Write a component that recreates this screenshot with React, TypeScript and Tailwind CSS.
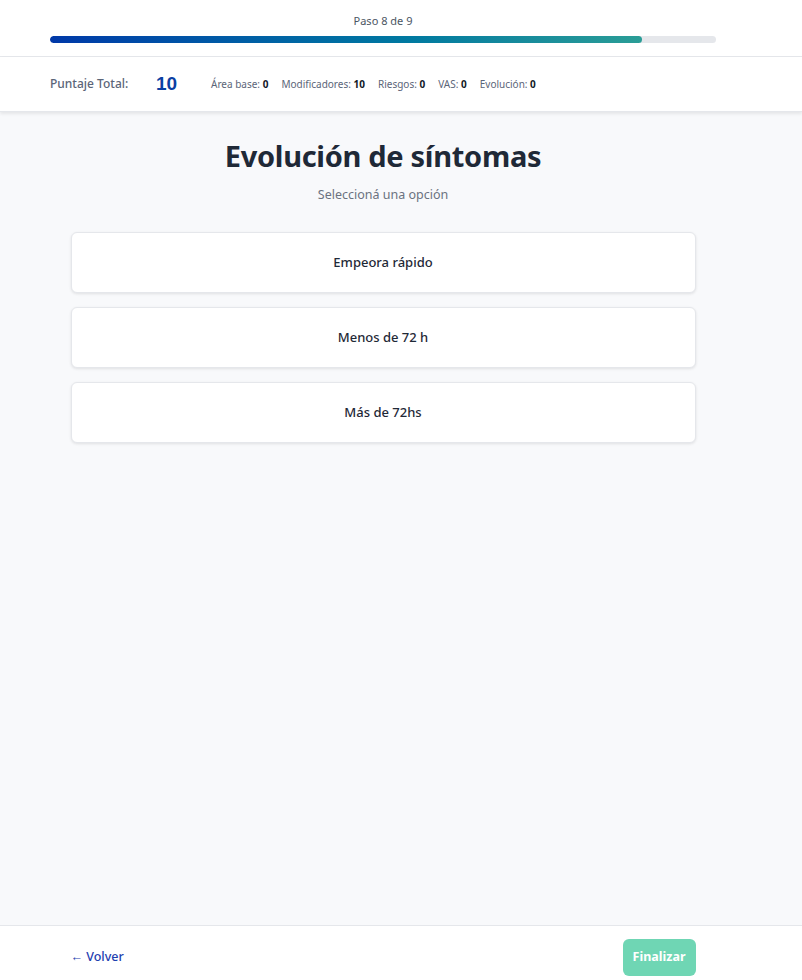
import React from "react";

const options = ["Empeora rápido", "Menos de 72 h", "Más de 72hs"];

const stats: [string, string][] = [
  ["Área base:", "0"],
  ["Modificadores:", "10"],
  ["Riesgos:", "0"],
  ["VAS:", "0"],
  ["Evolución:", "0"],
];

export default function App() {
  return (
    <div
      className="min-h-[980px] h-[980px] flex flex-col bg-[#f8f9fb] text-[#1f2937]"
      style={{ fontFamily: '"Noto Sans", "Open Sans", sans-serif' }}
    >
      {/* Progress header */}
      <div className="bg-white border-b border-[#e5e7eb]">
        <div className="w-[766px] px-[50px] pt-[13px] pb-[13px]">
          <div className="text-center text-[11px] leading-[16px] text-[#4b5563]">Paso 8 de 9</div>
          <div className="mt-[7px] h-[7px] w-full rounded-full bg-[#e5e7eb] overflow-hidden">
            <div className="h-full w-[88.9%] rounded-full bg-gradient-to-r from-[#0038a8] to-[#2a9d96]" />
          </div>
        </div>
      </div>

      {/* Score bar */}
      <div className="bg-white shadow-[0_2px_3px_rgba(0,0,0,0.08)] border-b border-[#e5e7eb] relative z-10">
        <div className="w-[766px] px-[50px] h-[54px] flex items-center">
          <span className="text-[12px] font-medium text-[#5b6578] w-[106px]">Puntaje Total:</span>
          <span
            className="text-[19px] font-bold text-[#0b3fa3] w-[55px]"
            style={{ fontFamily: '"Liberation Sans", Arial, sans-serif' }}
          >
            10
          </span>
          <div className="flex items-center gap-[13px] text-[10px] text-[#5b6578]">
            {stats.map(([k, v]) => (
              <span key={k}>
                {k} <span className="font-bold text-[#111827]">{v}</span>
              </span>
            ))}
          </div>
        </div>
      </div>

      {/* Main */}
      <div className="flex-1">
        <div className="w-[766px] flex flex-col items-center pt-[22px]">
          <h1 className="text-[29px] leading-[44px] font-bold text-[#1f2937] tracking-[-0.3px]">
            Evolución de síntomas
          </h1>
          <p className="mt-[7px] text-[12.5px] leading-[20px] text-[#6b7280]">Seleccioná una opción</p>
          <div className="mt-[27px] w-[625px] flex flex-col gap-[14px]">
            {options.map((o) => (
              <button
                key={o}
                className="h-[61px] w-full bg-white border border-[#e5e7eb] rounded-[6px] shadow-[0_1px_3px_rgba(0,0,0,0.1)] text-[13px] font-medium text-[#1f2937]"
              >
                {o}
              </button>
            ))}
          </div>
        </div>
      </div>

      {/* Footer */}
      <div className="bg-white border-t border-[#e5e7eb] h-[55px]">
        <div className="w-[766px] flex justify-center pt-[13px]">
          <div className="w-[625px] flex items-center justify-between">
            <span className="text-[12.5px] font-medium text-[#1e40af]">← Volver</span>
            <button className="h-[37px] px-[10px] rounded-[6px] bg-[#6fd6b4] text-white text-[12.5px] font-bold">
              Finalizar
            </button>
          </div>
        </div>
      </div>
    </div>
  );
}
